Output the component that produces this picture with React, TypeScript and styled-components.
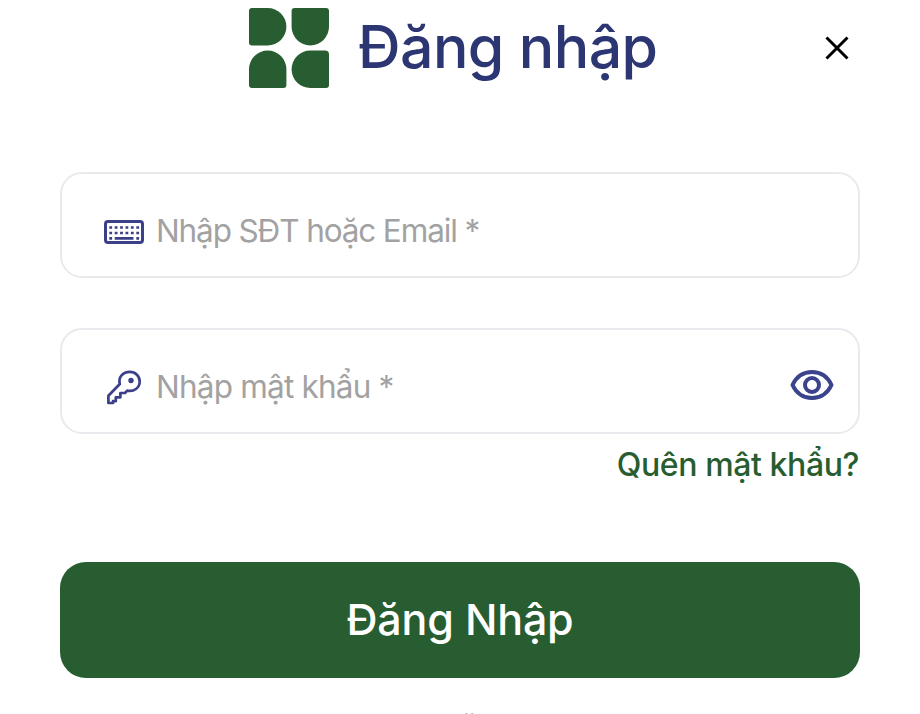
import React from "react";
import styled, { createGlobalStyle } from "styled-components";

const Global = createGlobalStyle`
  * { box-sizing: border-box; }
  body { margin: 0; background: #fff; overflow: hidden; font-family: Inter, "Liberation Sans", sans-serif; }
`;

const Page = styled.main`
  width: 920px;
  height: 714px;
  padding: 0 60px;
  overflow: hidden;
  display: flex;
  flex-direction: column;
  background: #fff;
`;

const Header = styled.header`
  height: 96px;
  flex: none;
  display: flex;
  align-items: center;
  padding-left: 189px;
`;

const Logo = styled.svg`
  width: 80px;
  height: 80px;
  flex: none;
  fill: #275d30;
`;

const Title = styled.h1`
  margin: 0 0 3px 29px;
  width: 330px;
  font-size: 59px;
  line-height: 93px;
  font-weight: 500;
  letter-spacing: -0.6px;
  color: #2c3673;
  white-space: nowrap;
`;

const IconButton = styled.button`
  border: 0;
  padding: 0;
  background: none;
  display: flex;
  svg { display: block; }
`;

const CloseButton = styled(IconButton)`
  margin-left: auto;
  margin-right: 11px;
`;

const Form = styled.form`
  display: flex;
  flex-direction: column;
  padding-top: 76px;
`;

const Field = styled.label`
  height: 106px;
  border: 2px solid #e9e9ee;
  border-radius: 22px;
  display: flex;
  align-items: center;
  padding: 12px 24px 0 42px;
  & + & { margin-top: 50px; }
  > svg { flex: none; }
`;

const Input = styled.input<{ $tracking: number }>`
  flex: 1;
  min-width: 0;
  height: 60px;
  margin: 0 0 2px 11px;
  padding: 0;
  border: 0;
  outline: 0;
  background: none;
  font-family: inherit;
  font-size: 31.5px;
  font-weight: 400;
  letter-spacing: ${(p) => p.$tracking}px;
  &::placeholder { color: #a2a2a2; opacity: 1; }
`;

const RevealButton = styled(IconButton)`
  margin-bottom: 4px;
`;

const Forgot = styled.a`
  align-self: flex-end;
  margin: 11px 1px 0 0;
  line-height: 40px;
  font-size: 32px;
  font-weight: 500;
  letter-spacing: -0.4px;
  color: #275d30;
`;

const Submit = styled.button`
  margin-top: 77px;
  height: 116px;
  flex: none;
  border: 0;
  border-radius: 26px;
  padding: 0 0 3px;
  background: #275d30;
  color: #fff;
  font-family: inherit;
  font-size: 43px;
  font-weight: 500;
  letter-spacing: -0.2px;
`;

const Divider = styled.p`
  margin: 27px 3px 0 0;
  line-height: 40px;
  font-size: 28px;
  text-align: center;
  color: #a2a2a2;
`;

const KeyboardIcon = () => (
  <svg width="41" height="40" viewBox="0 0 41 40" fill="none" stroke="#3b4089">
    <rect x="1.500" y="10.500" width="37" height="21" rx="2.500" strokeWidth="3" />
    <path d="M5.300 16.500H35.400M5.300 22H35.400" strokeWidth="2.700" strokeDasharray="2.800 2.600" />
    <path d="M5.300 27.300h2.800M10.700 27.300h18.800M32.300 27.300h2.800" strokeWidth="2.700" />
  </svg>
);

const KeyIcon = () => (
  <svg width="41" height="40" viewBox="0 0 41 40" fill="none" stroke="#3b4089">
    <path
      d="M4.400 36V28.700L15.800 17C14 10 19 4.900 25.800 4.900c5.800 0 9.900 4.200 9.900 9.500 0 6.500-5.800 10.800-12.500 9.200l-2.200 2.400h-4.600v4.300h-4.600v3.900H9V36Z"
      strokeWidth="2.700"
      strokeLinejoin="round"
    />
    <circle cx="27" cy="13.500" r="2.700" fill="#3b4089" stroke="none" />
  </svg>
);

const EyeIcon = () => (
  <svg width="44" height="32" viewBox="0 0 44 32" fill="none" stroke="#3a438c" strokeWidth="4">
    <path d="M2.500 16C6.500 7.500 13.500 3 22 3s15.500 4.500 19.500 13C37.500 24.500 30.500 29 22 29S6.500 24.500 2.500 16Z" strokeLinejoin="round" />
    <circle cx="22" cy="16" r="7" />
  </svg>
);

export default function App() {
  return (
    <>
      <Global />
      <Page>
        <Header>
          <Logo viewBox="0 0 80 80" aria-hidden="true">
            <path d="M3 0H18.700a18.700 18.700 0 0 1 0 37.400H3a3 3 0 0 1-3-3V3a3 3 0 0 1 3-3Z" />
            <path d="M45.600 0H77a3 3 0 0 1 3 3V18.700a18.700 18.700 0 0 1-37.400 0V3a3 3 0 0 1 3-3Z" />
            <path d="M0 61.300a18.700 18.700 0 0 1 37.400 0V77a3 3 0 0 1-3 3H3a3 3 0 0 1-3-3Z" />
            <path d="M61.300 42.600H76a4 4 0 0 1 4 4V77a3 3 0 0 1-3 3H61.300a18.700 18.700 0 0 1 0-37.400Z" />
          </Logo>
          <Title>Đăng nhập</Title>
          <CloseButton aria-label="Đóng">
            <svg width="24" height="24" viewBox="0 0 24 24" fill="none" stroke="#000" strokeWidth="3">
              <path d="M1.500 1.500l21 21M22.500 1.500l-21 21" />
            </svg>
          </CloseButton>
        </Header>
        <Form>
          <Field>
            <KeyboardIcon />
            <Input $tracking={-1.13} placeholder="Nhập SĐT hoặc Email *" />
          </Field>
          <Field>
            <KeyIcon />
            <Input $tracking={-0.8} type="password" placeholder="Nhập mật khẩu *" />
            <RevealButton type="button" aria-label="Hiện mật khẩu">
              <EyeIcon />
            </RevealButton>
          </Field>
          <Forgot>Quên mật khẩu?</Forgot>
          <Submit type="button">Đăng Nhập</Submit>
          <Divider>Hoặc</Divider>
        </Form>
      </Page>
    </>
  );
}
